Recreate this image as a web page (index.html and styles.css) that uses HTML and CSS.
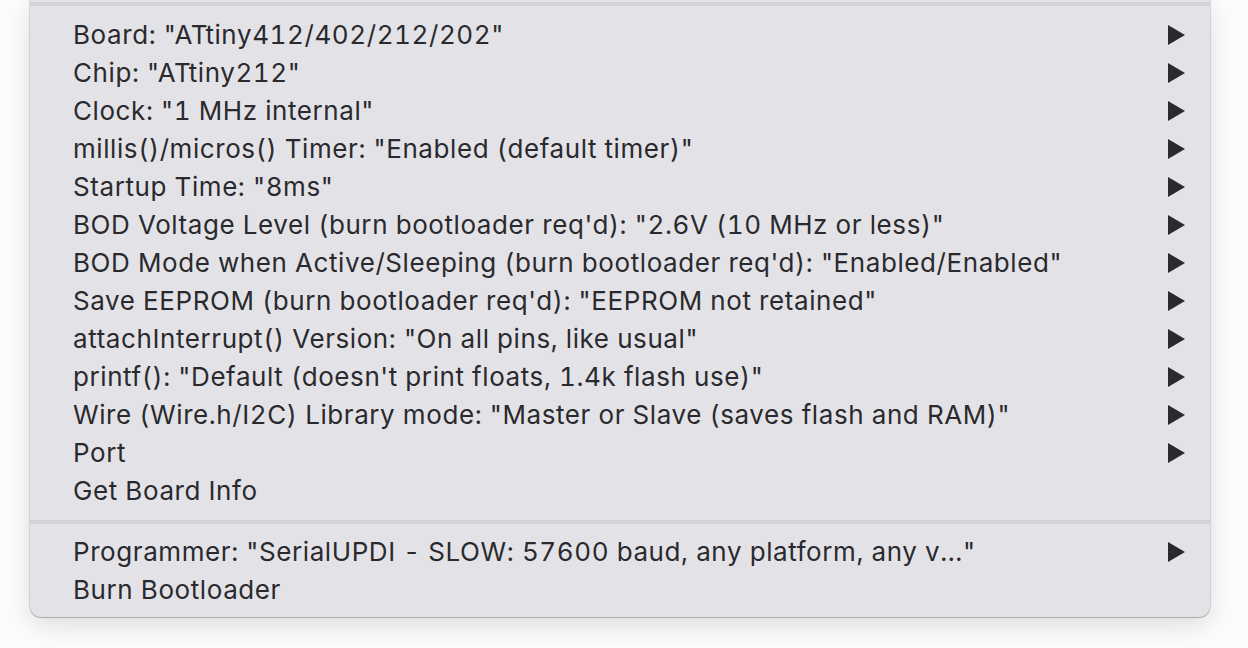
FILE: index.html
```html
<!DOCTYPE html>
<html>
<head>
<meta charset="utf-8">
<link rel="stylesheet" href="styles.css">
</head>
<body>
<div class="stage">
  <div class="menu">
    <div class="sep top"></div>
    <div class="group">
      <div class="item"><span class="label">Board: "ATtiny412/402/212/202"</span><svg class="arrow" viewBox="0 0 17 20"><polygon points="0,0 17,10 0,20"/></svg></div>
      <div class="item"><span class="label">Chip: "ATtiny212"</span><svg class="arrow" viewBox="0 0 17 20"><polygon points="0,0 17,10 0,20"/></svg></div>
      <div class="item"><span class="label">Clock: "1 MHz internal"</span><svg class="arrow" viewBox="0 0 17 20"><polygon points="0,0 17,10 0,20"/></svg></div>
      <div class="item"><span class="label">millis()/micros() Timer: "Enabled (default timer)"</span><svg class="arrow" viewBox="0 0 17 20"><polygon points="0,0 17,10 0,20"/></svg></div>
      <div class="item"><span class="label">Startup Time: "8ms"</span><svg class="arrow" viewBox="0 0 17 20"><polygon points="0,0 17,10 0,20"/></svg></div>
      <div class="item"><span class="label">BOD Voltage Level (burn bootloader req'd): "2.6V (10 MHz or less)"</span><svg class="arrow" viewBox="0 0 17 20"><polygon points="0,0 17,10 0,20"/></svg></div>
      <div class="item"><span class="label">BOD Mode when Active/Sleeping (burn bootloader req'd): "Enabled/Enabled"</span><svg class="arrow" viewBox="0 0 17 20"><polygon points="0,0 17,10 0,20"/></svg></div>
      <div class="item"><span class="label">Save EEPROM (burn bootloader req'd): "EEPROM not retained"</span><svg class="arrow" viewBox="0 0 17 20"><polygon points="0,0 17,10 0,20"/></svg></div>
      <div class="item"><span class="label">attachInterrupt() Version: "On all pins, like usual"</span><svg class="arrow" viewBox="0 0 17 20"><polygon points="0,0 17,10 0,20"/></svg></div>
      <div class="item"><span class="label">printf(): "Default (doesn't print floats, 1.4k flash use)"</span><svg class="arrow" viewBox="0 0 17 20"><polygon points="0,0 17,10 0,20"/></svg></div>
      <div class="item"><span class="label">Wire (Wire.h/I2C) Library mode: "Master or Slave (saves flash and RAM)"</span><svg class="arrow" viewBox="0 0 17 20"><polygon points="0,0 17,10 0,20"/></svg></div>
      <div class="item"><span class="label">Port</span><svg class="arrow" viewBox="0 0 17 20"><polygon points="0,0 17,10 0,20"/></svg></div>
      <div class="item"><span class="label">Get Board Info</span></div>
    </div>
    <div class="sep"></div>
    <div class="group last">
      <div class="item"><span class="label">Programmer: "SerialUPDI - SLOW: 57600 baud, any platform, any v..."</span><svg class="arrow" viewBox="0 0 17 20"><polygon points="0,0 17,10 0,20"/></svg></div>
      <div class="item"><span class="label">Burn Bootloader</span></div>
    </div>
  </div>
</div>
</body>
</html>
```

FILE: styles.css
```css
html, body {
  margin: 0;
  padding: 0;
  background: #fcfcfc;
  width: 1248px;
  height: 648px;
  overflow: hidden;
}
.stage {
  padding: 0 38px 0 30px;
}
.menu {
  width: 1180px;
  background: #e3e3e7;
  border-radius: 0 0 11px 11px;
  box-shadow: 0 0 0 1px rgba(0,0,0,0.10), 0 1px 1px rgba(0,0,0,0.18), 0 8px 26px rgba(0,0,0,0.13);
  padding-top: 2px;
  padding-bottom: 8px;
  font-family: Inter, "Noto Sans", sans-serif;
  font-size: 26px;
  letter-spacing: 0.58px;
  font-feature-settings: "tnum" 1;
  color: #2a2a2e;
}
.sep {
  height: 4px;
  background: #d3d3d7;
}
.group {
  padding: 10px 0 10px;
}
.group.last {
  padding: 9px 0 0;
}
.item {
  height: 38px;
  display: flex;
  align-items: center;
  padding: 0 25px 0 43px;
}
.label {
  flex: 1;
  white-space: nowrap;
  position: relative;
  top: -1px;
}
.arrow {
  width: 17px;
  height: 20px;
  fill: #2a2a2e;
}
```
